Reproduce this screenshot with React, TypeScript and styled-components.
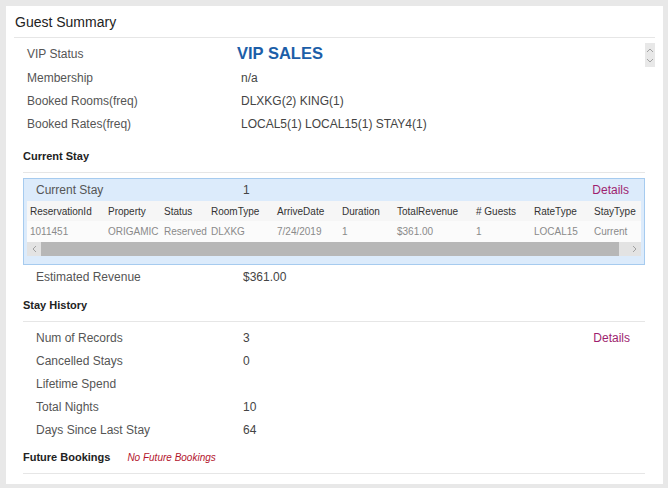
import styled, { createGlobalStyle } from "styled-components";

const GlobalStyle = createGlobalStyle`
  body {
    margin: 0;
    background: #e8e8e8;
    font-family: "Liberation Sans", Arial, sans-serif;
  }
`;

const Panel = styled.div`
  margin: 6px 5px 4px 6px;
  width: 657px;
  height: 478px;
  box-sizing: border-box;
  background: #ffffff;
  padding: 0 8px;
`;

const Title = styled.h2`
  margin: 0;
  padding: 6px 1px 5px;
  font-size: 14px;
  line-height: 20px;
  font-weight: normal;
  color: #222;
  border-bottom: 1px solid #e6e6e6;
`;

const Summary = styled.div`
  display: flex;
  align-items: flex-start;
  padding-top: 3px;
`;

const SummaryList = styled.div`
  flex: 1;
`;

const SummaryRow = styled.div<{ $tall?: boolean }>`
  display: grid;
  grid-template-columns: 214px 1fr;
  align-items: center;
  height: ${(p) => (p.$tall ? 25 : 23)}px;
  padding-left: 13px;
  font-size: 12px;
`;

const Label = styled.span`
  color: #555;
`;

const Value = styled.span`
  color: #444;
`;

const VipValue = styled.span`
  margin-left: -4px;
  font-size: 16.5px;
  font-weight: bold;
  color: #1c5ea8;
`;

const ScrollNub = styled.div`
  margin-top: 2px;
  width: 10px;
  height: 24px;
  background: #e8e8e8;
  display: flex;
  flex-direction: column;
  align-items: center;
  justify-content: space-around;
  padding: 2px 0;
  box-sizing: border-box;
`;

const Section = styled.section`
  margin: 0 10px 0 9px;
`;

const SectionHeader = styled.div<{ $top: number }>`
  display: flex;
  align-items: center;
  gap: 17px;
  padding: ${(p) => p.$top}px 0 9px;
  line-height: 13px;
  font-size: 11px;
  font-weight: bold;
  color: #222;
  border-bottom: 1px solid #e6e6e6;
`;

const NoBookings = styled.span`
  font-size: 10px;
  font-weight: normal;
  font-style: italic;
  color: #b3142c;
`;

const StayBox = styled.div`
  margin-top: 5px;
  border: 1px solid #a6cbef;
  background: #dcebfb;
  padding: 0 3px 8px;
`;

const InfoRow = styled.div<{ $left: number; $right: number; $h: number }>`
  display: grid;
  grid-template-columns: 207px 1fr auto;
  align-items: center;
  height: ${(p) => p.$h}px;
  padding: 0 ${(p) => p.$right}px 0 ${(p) => p.$left}px;
  font-size: 12px;
`;

const DetailsLink = styled.a`
  color: #9e1f6f;
  text-decoration: none;
  cursor: pointer;
`;

const TableView = styled.div`
  overflow: hidden;
`;

const TableRow = styled.div<{ $head?: boolean }>`
  display: grid;
  grid-template-columns: 78px 56px 47px 66px 65px 55px 79px 58px 60px 60px;
  width: 624px;
  align-items: center;
  height: ${(p) => (p.$head ? 20 : 21)}px;
  background: ${(p) => (p.$head ? "#f6f6f6" : "#fbfbfb")};
  color: ${(p) => (p.$head ? "#333" : "#8a8a8a")};
  font-size: 10px;
`;

const Cell = styled.span`
  padding-left: 3px;
  white-space: nowrap;
`;

const HScroll = styled.div`
  display: flex;
  height: 14px;
  background: #e3e3e3;
`;

const ScrollBtn = styled.div<{ $w: number }>`
  width: ${(p) => p.$w}px;
  display: flex;
  align-items: center;
  justify-content: center;
`;

const Thumb = styled.div`
  width: 578px;
  background: #b7b7b7;
`;

const Filler = styled.div`
  flex: 1;
`;

const RowList = styled.div`
  margin-top: 4px;
`;

const Chevron = ({ dir }: { dir: "up" | "down" | "left" | "right" }) => {
  const d = {
    up: "M1 4 L4 1 L7 4",
    down: "M1 1 L4 4 L7 1",
    left: "M4 1 L1 4 L4 7",
    right: "M1 1 L4 4 L1 7",
  }[dir];
  const horiz = dir === "left" || dir === "right";
  return (
    <svg width={horiz ? 5 : 8} height={horiz ? 8 : 5} viewBox={horiz ? "0 0 5 8" : "0 0 8 5"}>
      <path d={d} fill="none" stroke="#9a9a9a" strokeWidth="0.9" />
    </svg>
  );
};

const summary = [
  { label: "Membership", value: "n/a" },
  { label: "Booked Rooms(freq)", value: "DLXKG(2) KING(1)" },
  { label: "Booked Rates(freq)", value: "LOCAL5(1) LOCAL15(1) STAY4(1)" },
];

const columns = [
  "ReservationId",
  "Property",
  "Status",
  "RoomType",
  "ArriveDate",
  "Duration",
  "TotalRevenue",
  "# Guests",
  "RateType",
  "StayType",
];

const reservation = [
  "1011451",
  "ORIGAMIC",
  "Reserved",
  "DLXKG",
  "7/24/2019",
  "1",
  "$361.00",
  "1",
  "LOCAL15",
  "Current",
];

const history = [
  { label: "Num of Records", value: "3", details: true },
  { label: "Cancelled Stays", value: "0" },
  { label: "Lifetime Spend", value: "" },
  { label: "Total Nights", value: "10" },
  { label: "Days Since Last Stay", value: "64" },
];

export default function App() {
  return (
    <>
      <GlobalStyle />
      <Panel>
        <Title>Guest Summary</Title>
        <Summary>
          <SummaryList>
            <SummaryRow $tall>
              <Label>VIP Status</Label>
              <VipValue>VIP SALES</VipValue>
            </SummaryRow>
            {summary.map((row) => (
              <SummaryRow key={row.label}>
                <Label>{row.label}</Label>
                <Value>{row.value}</Value>
              </SummaryRow>
            ))}
          </SummaryList>
          <ScrollNub>
            <Chevron dir="up" />
            <Chevron dir="down" />
          </ScrollNub>
        </Summary>

        <Section>
          <SectionHeader $top={15}>Current Stay</SectionHeader>
          <StayBox>
            <InfoRow $left={9} $right={12} $h={22}>
              <Label>Current Stay</Label>
              <Value>1</Value>
              <DetailsLink>Details</DetailsLink>
            </InfoRow>
            <TableView>
              <TableRow $head>
                {columns.map((c) => (
                  <Cell key={c}>{c}</Cell>
                ))}
              </TableRow>
              <TableRow>
                {reservation.map((v, i) => (
                  <Cell key={i}>{v}</Cell>
                ))}
              </TableRow>
            </TableView>
            <HScroll>
              <ScrollBtn $w={14}>
                <Chevron dir="left" />
              </ScrollBtn>
              <Thumb />
              <Filler />
              <ScrollBtn $w={14}>
                <Chevron dir="right" />
              </ScrollBtn>
            </HScroll>
          </StayBox>
          <InfoRow $left={13} $right={15} $h={23}>
            <Label>Estimated Revenue</Label>
            <Value>$361.00</Value>
          </InfoRow>
        </Section>

        <Section>
          <SectionHeader $top={11}>Stay History</SectionHeader>
          <RowList>
            {history.map((row) => (
              <InfoRow key={row.label} $left={13} $right={15} $h={23}>
                <Label>{row.label}</Label>
                <Value>{row.value}</Value>
                {row.details ? <DetailsLink>Details</DetailsLink> : <span />}
              </InfoRow>
            ))}
          </RowList>
        </Section>

        <Section>
          <SectionHeader $top={10}>
            Future Bookings
            <NoBookings>No Future Bookings</NoBookings>
          </SectionHeader>
        </Section>
      </Panel>
    </>
  );
}
